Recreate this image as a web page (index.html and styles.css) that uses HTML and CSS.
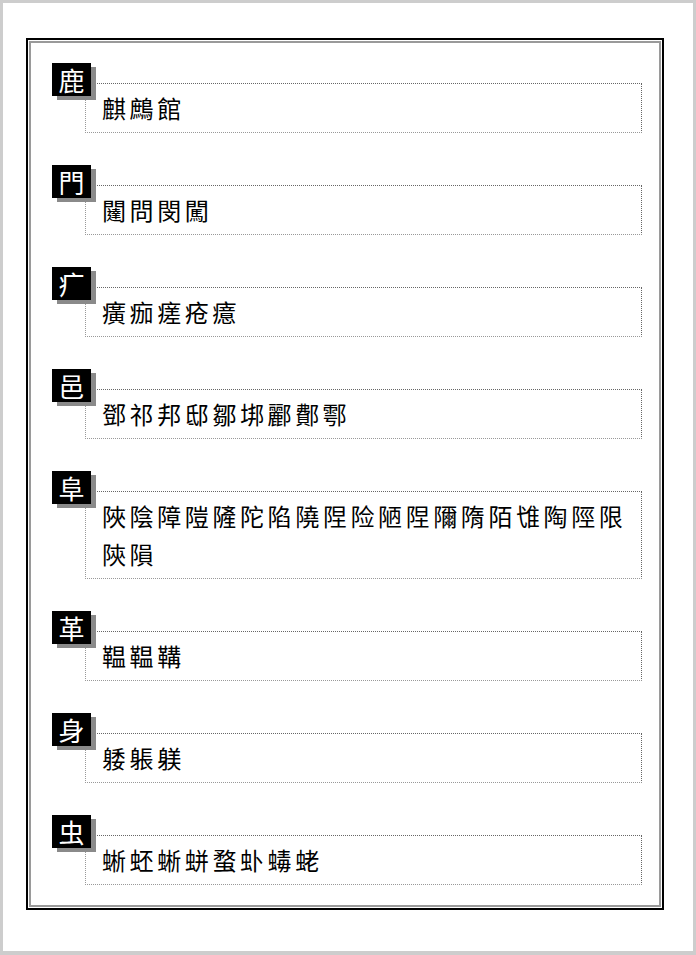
FILE: index.html
```html
<!DOCTYPE html>
<html>
<head>
    <meta charset="utf-8">
    <title>部首字表</title>
    <link rel="stylesheet" href="styles.css">
</head>
<body>
    <div class="frame">
        <div class="frame-inner">
            <div class="entry">
                <div class="radical">鹿</div>
                <div class="chars">麒鷓館</div>
            </div>
            <div class="entry">
                <div class="radical">門</div>
                <div class="chars">闥問閔闖</div>
            </div>
            <div class="entry">
                <div class="radical">疒</div>
                <div class="chars">癀痂瘥疮癔</div>
            </div>
            <div class="entry">
                <div class="radical">邑</div>
                <div class="chars">鄧祁邦邸鄒垹酈鄪鄠</div>
            </div>
            <div class="entry">
                <div class="radical">阜</div>
                <div class="chars">陜陰障隑隡陀陷隢陧险陋陧隬隋陌隿陶陘限陝隕</div>
            </div>
            <div class="entry">
                <div class="radical">革</div>
                <div class="chars">鞰鞰鞲</div>
            </div>
            <div class="entry">
                <div class="radical">身</div>
                <div class="chars">躷躼躾</div>
            </div>
            <div class="entry">
                <div class="radical">虫</div>
                <div class="chars">蜥蚽蜥蛢蝥虲蝳蛯</div>
            </div>
        </div>
    </div>
</body>
</html>
```

FILE: styles.css
```css
html {
    background: #cdcdcd;
}

body {
    margin: 3px;
    min-height: 948px;
    box-sizing: border-box;
    padding: 35px 0 0 23px;
    background: #fff;
    font-family: "Noto Sans CJK TC", "Noto Sans CJK SC", sans-serif;
}

/* 外框：黑线 + 灰线 */
.frame {
    width: 638px;
    height: 872px;
    box-sizing: border-box;
    border: 2px solid #000;
    padding: 1px;
}

.frame-inner {
    height: 100%;
    box-sizing: border-box;
    border: 2px solid #9a9a9a;
    padding: 20px 17px 0 21px;
}

.entry {
    margin-bottom: 32px;
}

.radical {
    position: relative;
    z-index: 1;
    width: 39px;
    height: 33px;
    background: #000;
    color: #fff;
    font-size: 26px;
    line-height: 33px;
    text-align: center;
    box-shadow: 5px 4px 0 #8a8a8a;
}

.chars {
    margin: -13px 0 0 33px;
    padding: 5px 8px 5px 16px;
    border: 1px dotted #999;
    border-top-color: #666;
    border-right-color: #666;
    font-size: 24px;
    line-height: 38px;
    letter-spacing: 3.6px;
    color: #000;
}
```
